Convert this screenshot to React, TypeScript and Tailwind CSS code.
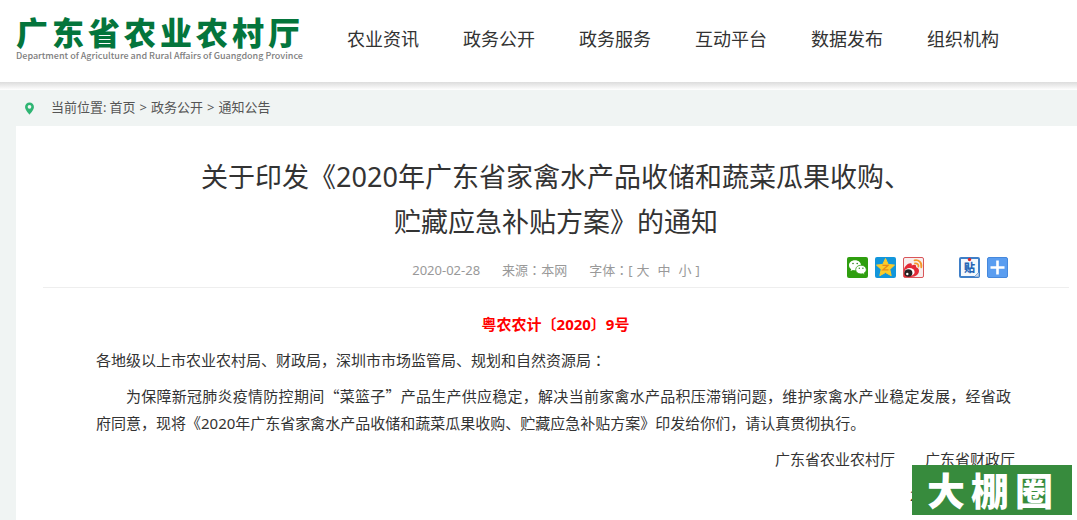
import React from "react";

const NAV = ["农业资讯", "政务公开", "政务服务", "互动平台", "数据发布", "组织机构"];
const CRUMBS = ["首页", "政务公开", "通知公告"];
const SIZES = ["大", "中", "小"];
const LOGO = "广东省农业农村厅";

function Logo() {
  return (
    <a href="#" className="flex w-[287px] shrink-0 flex-col text-[#04753c]">
      <span className="flex gap-1 text-[32px] leading-[34px] font-black">
        {LOGO.split("").map((c, i) => (
          <span key={i}>{c}</span>
        ))}
      </span>
      <span className="font-['Noto_Sans_CJK_SC',sans-serif] text-[9px] leading-3 font-medium whitespace-nowrap text-[#808080]">
        Department of Agriculture and Rural Affairs of Guangdong Province
      </span>
    </a>
  );
}

function Colon() {
  return <span className="font-['Noto_Sans_CJK_TC',sans-serif] leading-none" lang="zh-Hant">：</span>;
}

function WeChatIcon() {
  return (
    <svg viewBox="0 0 21 21" className="size-[21px]" aria-hidden="true">
      <rect width="21" height="21" rx="2" fill="#2f9e0f" />
      <path d="M8 3.2c-3.500 0-6 2.200-6 5 0 1.600.8 3 2.200 3.900l-.6 2 2.300-1.200c.7.2 1.400.3 2.100.3 3.500 0 6-2.200 6-5s-2.500-5-6-5z" fill="#fff" />
      <path d="M14 8.200c-3 0-5.300 1.900-5.300 4.400s2.300 4.400 5.300 4.400c.6 0 1.200-.1 1.800-.3l1.900 1.100-.5-1.800c1.300-.8 2.100-2 2.100-3.400 0-2.500-2.300-4.400-5.300-4.400z" fill="#fff" stroke="#2f9e0f" strokeWidth=".8" />
      <g fill="#2f7e1f">
        <circle cx="6" cy="6.500" r=".8" />
        <circle cx="10.200" cy="6.500" r=".8" />
        <circle cx="12.300" cy="11.300" r=".7" />
        <circle cx="15.900" cy="11.300" r=".7" />
      </g>
    </svg>
  );
}

function QzoneIcon() {
  return (
    <svg viewBox="0 0 21 21" className="size-[21px]" aria-hidden="true">
      <rect width="21" height="21" rx="2" fill="#1296db" />
      <path d="M10.500 1.500l2.700 5.900 6.300.7-4.700 4.300 1.400 6.300-5.700-3.200-5.700 3.200 1.400-6.300L1.500 8.100l6.300-.7z" fill="#fccb2a" stroke="#fccb2a" strokeWidth="1" strokeLinejoin="round" />
      <path d="M7.500 8.300h5.500L8 12.800h5.500" fill="none" stroke="#e58a1a" strokeWidth="1.300" />
    </svg>
  );
}

function WeiboIcon() {
  return (
    <svg viewBox="0 0 21 21" className="size-[21px]" aria-hidden="true">
      <rect x=".5" y=".5" width="20" height="20" rx="1.500" fill="#f7eeee" stroke="#d9565a" />
      <path d="M1 13c0-3.500 4-7 6.500-6.800 1.500.1 1.500 1.200 1.200 2.200 2-1 4.800-1 4.400 1.200-.1.500 0 .8.600 1 3 1 3.100 5.200.3 7.400-1.500 1.200-3.500 2-6 2H1z" fill="#e32a36" />
      <ellipse cx="6.600" cy="15" rx="5" ry="4" fill="#fff" />
      <ellipse cx="5.400" cy="16" rx="4" ry="3.800" fill="#222" />
      <circle cx="4.300" cy="17" r="1.200" fill="#fff" />
      <path d="M11.500 3.300c4-1 7.700 2.200 6.800 7M12 6.400c2.200-.5 3.900 1.200 3.400 3.200" fill="none" stroke="#f5982a" strokeWidth="1.800" strokeLinecap="round" />
    </svg>
  );
}

function TiebaIcon() {
  return (
    <span className="relative flex size-[21px] items-center justify-center rounded-xs border-2 border-[#3f7fc8] bg-[#f4f8fc] text-[11px] leading-[11px] font-black text-[#2464b4]">
      贴
      <svg viewBox="0 0 21 21" className="absolute -top-0.5 -left-0.5 size-[21px]" aria-hidden="true">
        <circle cx="10.500" cy="2.500" r="1.700" fill="#d8262c" />
        <path d="M15 20l5-5v5z" fill="#c9d8e8" stroke="#3f7fc8" strokeWidth=".6" />
      </svg>
    </span>
  );
}

function MoreIcon() {
  return (
    <svg viewBox="0 0 21 21" className="size-[21px]" aria-hidden="true">
      <rect x=".5" y=".5" width="20" height="20" rx="1.500" fill="#5a9df0" stroke="#4688dc" />
      <path d="M10.500 3.500v14M3.500 10.500h14" stroke="#fff" strokeWidth="2.600" />
    </svg>
  );
}

export default function App() {
  return (
    <div className="relative flex min-h-screen flex-col bg-[#f0f4f3] font-['Noto_Sans','Noto_Sans_CJK_SC',sans-serif] text-[#333]">
      <header className="flex h-[82px] items-start gap-11 bg-white pt-4 pl-4">
        <Logo />
        <nav className="flex gap-11 pt-[7px] text-lg leading-8 whitespace-nowrap">
          {NAV.map((n) => (
            <a key={n} href="#">
              {n}
            </a>
          ))}
        </nav>
      </header>
      <div className="h-2 bg-linear-to-b from-[#dcdcdc] to-white" />

      <nav aria-label="当前位置" className="flex h-9 items-center pl-6 text-[13px] text-[#555]">
        <svg viewBox="0 0 11 14" className="mr-4 h-[13px] w-[11px]" aria-hidden="true">
          <path d="M5.500 0.500A4.800 4.800 0 0 0 .7 5.300C.7 8.500 5.500 13.500 5.500 13.500s4.800-5 4.800-8.200A4.800 4.800 0 0 0 5.500.5zm0 2.700a2 2 0 1 1 0 4 2 2 0 0 1 0-4z" fill="#2fb573" fillRule="evenodd" />
        </svg>
        <span className="mr-[3px]">当前位置:</span>
        {CRUMBS.map((c, i) => (
          <React.Fragment key={c}>
            {i > 0 && <span className="mx-1">&gt;</span>}
            <a href="#">{c}</a>
          </React.Fragment>
        ))}
      </nav>

      <main className="ml-4 flex-1 bg-white pt-7 pr-2 pl-[27px]">
        <h1 className="text-center text-[27px] leading-[45px]">
          关于印发《2020年广东省家禽水产品收储和蔬菜瓜果收购、
          <br />
          贮藏应急补贴方案》的通知
        </h1>

        <div className="grid grid-cols-[1fr_auto_1fr] items-start border-b border-[#eee] pt-3 pb-1.5 text-[13px] leading-[22px] text-[#999]">
          <div className="col-start-2 flex items-center gap-[22px] pt-[3px]">
            <time>2020-02-28</time>
            <span>来源<Colon />本网</span>
            <span className="flex gap-1">
              <span>字体<Colon />[</span>
              <span className="flex gap-2">
                {SIZES.map((s) => (
                  <button key={s} type="button">
                    {s}
                  </button>
                ))}
              </span>
              ]
            </span>
          </div>
          <div className="flex justify-end gap-[7px] pt-px pr-[61px]">
            <a href="#" aria-label="微信"><WeChatIcon /></a>
            <a href="#" aria-label="QQ空间"><QzoneIcon /></a>
            <a href="#" aria-label="新浪微博" className="mr-7"><WeiboIcon /></a>
            <a href="#" aria-label="百度贴吧"><TiebaIcon /></a>
            <a href="#" aria-label="更多"><MoreIcon /></a>
          </div>
        </div>

        <article className="flex flex-col gap-[9px] pt-[23px] pr-[54px] pl-[53px] text-[15px] leading-[27px]">
          <p className="text-center font-bold text-[#f00]">粤农农计〔2020〕9号</p>
          <p>各地级以上市农业农村局、财政局，深圳市市场监管局、规划和自然资源局<Colon /></p>
          <p className="pr-1 indent-[30px] text-justify">
            为保障新冠肺炎疫情防控期间
            <span className="font-['Noto_Sans_CJK_SC',sans-serif] leading-none">“菜篮子”</span>
            产品生产供应稳定，解决当前家禽水产品积压滞销问题，维护家禽水产业稳定发展，经省政府同意，现将《2020年广东省家禽水产品收储和蔬菜瓜果收购、贮藏应急补贴方案》印发给你们，请认真贯彻执行。
          </p>
          <p className="flex justify-end gap-[30px]">
            <span>广东省农业农村厅</span>
            <span>广东省财政厅</span>
          </p>
          <p className="text-right">2020年2月28日</p>
        </article>
      </main>

      <div className="absolute right-[5px] bottom-[5px] flex h-[50px] w-40 items-center justify-center gap-1.5 bg-[#378b3d] pr-1 text-[38px] leading-none font-black text-white">
        <span>大</span>
        <span>棚</span>
        <span>圈</span>
      </div>
    </div>
  );
}
